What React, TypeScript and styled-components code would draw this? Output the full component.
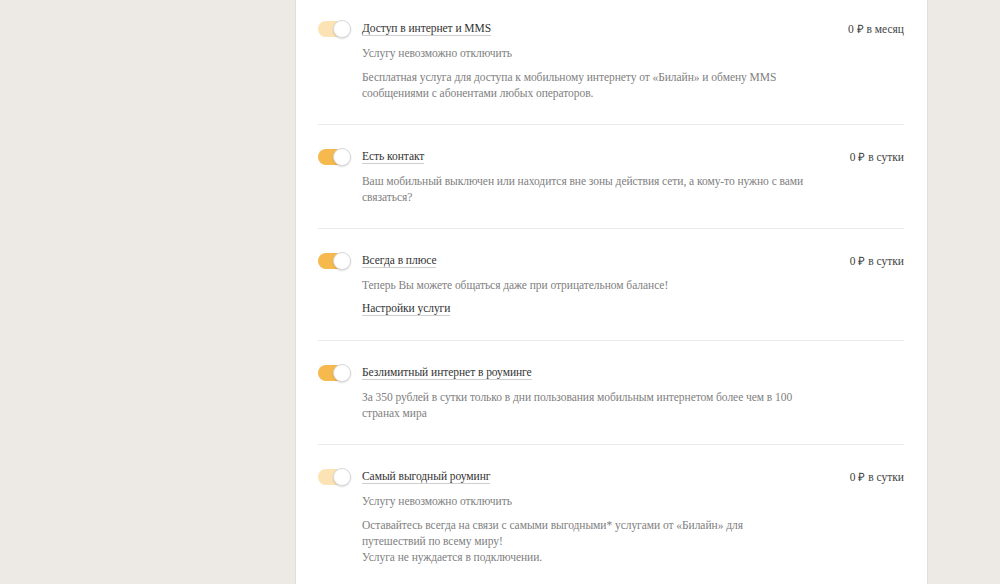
import React from "react";
import styled, { createGlobalStyle } from "styled-components";

const GlobalStyle = createGlobalStyle`
  html, body {
    margin: 0;
    padding: 0;
    background: #edeae6;
    font-family: "Liberation Serif", "Times New Roman", serif;
  }
`;

const Page = styled.div`
  display: flex;
  justify-content: flex-start;
  padding-left: 295px;
  min-height: 584px;
`;

const Panel = styled.div`
  width: 633px;
  box-sizing: border-box;
  background: #fff;
  border-left: 1px solid #e2ded9;
  border-right: 1px solid #e2ded9;
  padding: 0 23px 0 22px;
`;

const ServiceRow = styled.div`
  display: grid;
  grid-template-columns: 44px 1fr auto;
  padding: 24px 0 23px;
  border-bottom: 1px solid #ebebeb;

  &:first-child {
    padding-top: 21px;
  }
  &:last-child {
    border-bottom: none;
  }
`;

const Toggle = styled.div`
  position: relative;
  width: 34px;
  height: 16px;
`;

const Track = styled.div<{ $disabled?: boolean }>`
  width: 30px;
  height: 16px;
  border-radius: 8px;
  background: ${(p) => (p.$disabled ? "#fbe3b4" : "#f6b94d")};
`;

const Knob = styled.div`
  position: absolute;
  top: -1px;
  left: 15px;
  width: 16px;
  height: 16px;
  border-radius: 50%;
  background: #fff;
  border: 1px solid #d9d9d9;
  box-shadow: 0 1px 2px rgba(0, 0, 0, 0.15);
`;

const Body = styled.div`
  display: flex;
  flex-direction: column;
  align-items: flex-start;
  gap: 8px;
`;

const Title = styled.span`
  font-size: 11.5px;
  letter-spacing: -0.05px;
  line-height: 14px;
  color: #333;
  border-bottom: 1px solid #cfcfcf;
  margin-bottom: 1px;
`;

const Note = styled.div`
  font-size: 11.5px;
  letter-spacing: -0.05px;
  line-height: 16px;
  color: #808080;
  white-space: nowrap;
`;

const Price = styled.div`
  font-size: 11.5px;
  line-height: 16px;
  color: #444;
  white-space: nowrap;
`;

type Service = {
  title: string;
  disabled?: boolean;
  price?: string;
  notes: React.ReactNode[];
  link?: string;
};

const services: Service[] = [
  {
    title: "Доступ в интернет и MMS",
    disabled: true,
    price: "0 ₽ в месяц",
    notes: [
      "Услугу невозможно отключить",
      <>
        Бесплатная услуга для доступа к мобильному интернету от «Билайн» и обмену MMS
        <br />
        сообщениями с абонентами любых операторов.
      </>,
    ],
  },
  {
    title: "Есть контакт",
    price: "0 ₽ в сутки",
    notes: [
      <>
        Ваш мобильный выключен или находится вне зоны действия сети, а кому-то нужно с вами
        <br />
        связаться?
      </>,
    ],
  },
  {
    title: "Всегда в плюсе",
    price: "0 ₽ в сутки",
    notes: ["Теперь Вы можете общаться даже при отрицательном балансе!"],
    link: "Настройки услуги",
  },
  {
    title: "Безлимитный интернет в роуминге",
    notes: [
      <>
        За 350 рублей в сутки только в дни пользования мобильным интернетом более чем в 100
        <br />
        странах мира
      </>,
    ],
  },
  {
    title: "Самый выгодный роуминг",
    disabled: true,
    price: "0 ₽ в сутки",
    notes: [
      "Услугу невозможно отключить",
      <>
        Оставайтесь всегда на связи с самыми выгодными* услугами от «Билайн» для
        <br />
        путешествий по всему миру!
        <br />
        Услуга не нуждается в подключении.
      </>,
    ],
  },
];

export default function App() {
  return (
    <Page>
      <GlobalStyle />
      <Panel>
        {services.map((s) => (
          <ServiceRow key={s.title}>
            <Toggle>
              <Track $disabled={s.disabled} />
              <Knob />
            </Toggle>
            <Body>
              <Title>{s.title}</Title>
              {s.notes.map((n, i) => (
                <Note key={i}>{n}</Note>
              ))}
              {s.link && <Title>{s.link}</Title>}
            </Body>
            <Price>{s.price}</Price>
          </ServiceRow>
        ))}
      </Panel>
    </Page>
  );
}
